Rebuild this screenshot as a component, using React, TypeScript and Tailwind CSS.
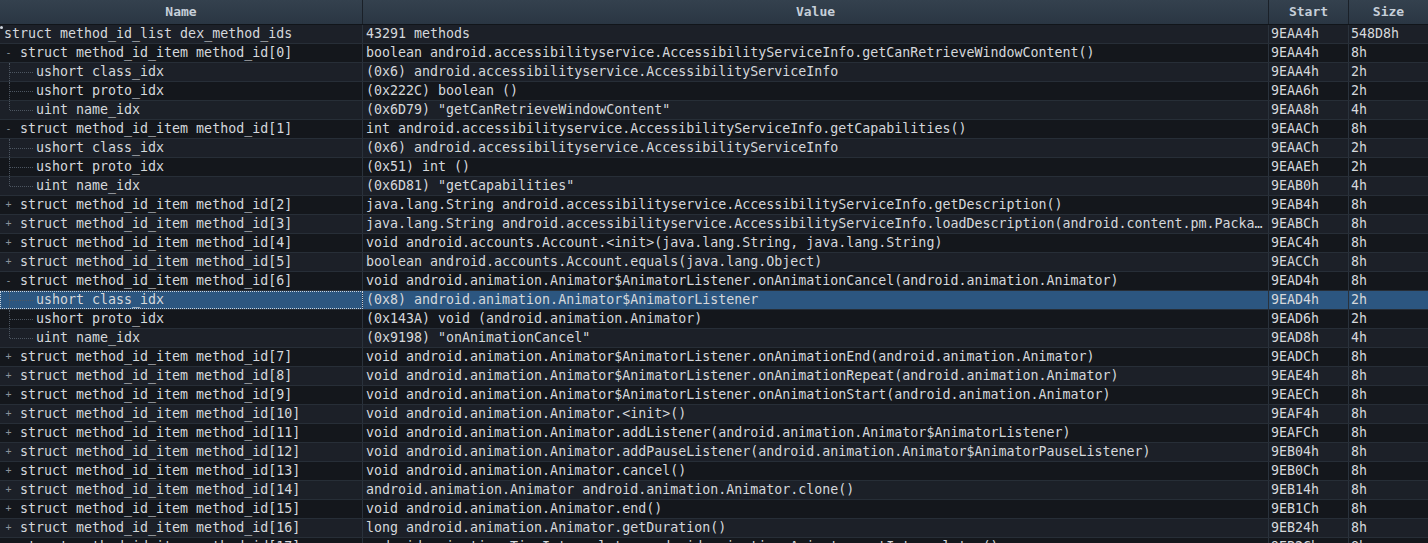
import React from "react";

type Row = {
  name: string;
  value: string;
  start: string;
  size: string;
  level: 0 | 1 | 2;
  toggle?: "+" | "-";
  last?: boolean;
};

const A = "android.accessibilityservice.AccessibilityServiceInfo";
const L = "void android.animation.Animator$AnimatorListener";

const item = (i: number) => `struct method_id_item method_id[${i}]`;

const rows: Row[] = [
  { level: 0, name: "struct method_id_list dex_method_ids", value: "43291 methods", start: "9EAA4h", size: "548D8h" },
  { level: 1, toggle: "-", name: item(0), value: `boolean ${A}.getCanRetrieveWindowContent()`, start: "9EAA4h", size: "8h" },
  { level: 2, name: "ushort class_idx", value: `(0x6) ${A}`, start: "9EAA4h", size: "2h" },
  { level: 2, name: "ushort proto_idx", value: "(0x222C) boolean ()", start: "9EAA6h", size: "2h" },
  { level: 2, last: true, name: "uint name_idx", value: '(0x6D79) "getCanRetrieveWindowContent"', start: "9EAA8h", size: "4h" },
  { level: 1, toggle: "-", name: item(1), value: `int ${A}.getCapabilities()`, start: "9EAACh", size: "8h" },
  { level: 2, name: "ushort class_idx", value: `(0x6) ${A}`, start: "9EAACh", size: "2h" },
  { level: 2, name: "ushort proto_idx", value: "(0x51) int ()", start: "9EAAEh", size: "2h" },
  { level: 2, last: true, name: "uint name_idx", value: '(0x6D81) "getCapabilities"', start: "9EAB0h", size: "4h" },
  { level: 1, toggle: "+", name: item(2), value: `java.lang.String ${A}.getDescription()`, start: "9EAB4h", size: "8h" },
  { level: 1, toggle: "+", name: item(3), value: `java.lang.String ${A}.loadDescription(android.content.pm.PackageManager)`, start: "9EABCh", size: "8h" },
  { level: 1, toggle: "+", name: item(4), value: "void android.accounts.Account.<init>(java.lang.String, java.lang.String)", start: "9EAC4h", size: "8h" },
  { level: 1, toggle: "+", name: item(5), value: "boolean android.accounts.Account.equals(java.lang.Object)", start: "9EACCh", size: "8h" },
  { level: 1, toggle: "-", name: item(6), value: `${L}.onAnimationCancel(android.animation.Animator)`, start: "9EAD4h", size: "8h" },
  { level: 2, name: "ushort class_idx", value: "(0x8) android.animation.Animator$AnimatorListener", start: "9EAD4h", size: "2h" },
  { level: 2, name: "ushort proto_idx", value: "(0x143A) void (android.animation.Animator)", start: "9EAD6h", size: "2h" },
  { level: 2, last: true, name: "uint name_idx", value: '(0x9198) "onAnimationCancel"', start: "9EAD8h", size: "4h" },
  { level: 1, toggle: "+", name: item(7), value: `${L}.onAnimationEnd(android.animation.Animator)`, start: "9EADCh", size: "8h" },
  { level: 1, toggle: "+", name: item(8), value: `${L}.onAnimationRepeat(android.animation.Animator)`, start: "9EAE4h", size: "8h" },
  { level: 1, toggle: "+", name: item(9), value: `${L}.onAnimationStart(android.animation.Animator)`, start: "9EAECh", size: "8h" },
  { level: 1, toggle: "+", name: item(10), value: "void android.animation.Animator.<init>()", start: "9EAF4h", size: "8h" },
  { level: 1, toggle: "+", name: item(11), value: "void android.animation.Animator.addListener(android.animation.Animator$AnimatorListener)", start: "9EAFCh", size: "8h" },
  { level: 1, toggle: "+", name: item(12), value: "void android.animation.Animator.addPauseListener(android.animation.Animator$AnimatorPauseListener)", start: "9EB04h", size: "8h" },
  { level: 1, toggle: "+", name: item(13), value: "void android.animation.Animator.cancel()", start: "9EB0Ch", size: "8h" },
  { level: 1, toggle: "+", name: item(14), value: "android.animation.Animator android.animation.Animator.clone()", start: "9EB14h", size: "8h" },
  { level: 1, toggle: "+", name: item(15), value: "void android.animation.Animator.end()", start: "9EB1Ch", size: "8h" },
  { level: 1, toggle: "+", name: item(16), value: "long android.animation.Animator.getDuration()", start: "9EB24h", size: "8h" },
  { level: 1, toggle: "+", name: item(17), value: "android.animation.TimeInterpolator android.animation.Animator.getInterpolator()", start: "9EB2Ch", size: "8h" },
];

const SELECTED = 14;

function NameCell({ row, selected }: { row: Row; selected: boolean }) {
  return (
    <div
      className={`relative w-[363px] shrink-0 h-full flex items-center border-r border-[#2a323c] overflow-hidden whitespace-nowrap ${
        selected ? "outline outline-1 outline-dotted outline-[#c9d4e0] -outline-offset-1" : ""
      }`}
    >
      {row.level === 0 && (
        <>
          <span className="absolute left-0 top-[1px] w-[3px] h-[3px] bg-[#cfd6de] rounded-full" />
          <span className="pl-[4px]">{row.name}</span>
        </>
      )}
      {row.level === 1 && (
        <>
          <span className="w-[20px] shrink-0 flex justify-center pl-[1px] pr-[4px] text-[10px] text-[#8a939c]">
            {row.toggle}
          </span>
          <span>{row.name}</span>
        </>
      )}
      {row.level === 2 && (
        <>
          <span
            className={`absolute left-[9px] top-0 border-l border-dotted border-[#4d5661] ${
              row.last ? "h-1/2" : "h-full"
            }`}
          />
          <span className="absolute left-[10px] top-1/2 w-[23px] border-t border-dotted border-[#4d5661]" />
          <span className="pl-[36px]">{row.name}</span>
        </>
      )}
    </div>
  );
}

export default function App() {
  return (
    <div className="w-[1428px] h-[543px] overflow-hidden bg-[#15181e] font-['DejaVu_Sans_Mono',monospace] text-[13.3px] leading-[18px] text-[#d5d8dc]">
      {/* Header */}
      <div className="flex h-[25px] bg-gradient-to-b from-[#34414e] to-[#2a3643] border-b border-[#11151a] font-bold text-[#c6cfd9] text-[13px]">
        <div className="w-[363px] shrink-0 flex items-center justify-center border-r border-[#1a2028]">Name</div>
        <div className="w-[906px] shrink-0 flex items-center justify-center border-r border-[#1a2028]">Value</div>
        <div className="w-[80px] shrink-0 flex items-center justify-center border-r border-[#1a2028]">Start</div>
        <div className="flex-1 flex items-center justify-center">Size</div>
      </div>

      {/* Rows */}
      {rows.map((row, i) => {
        const selected = i === SELECTED;
        const bg = selected ? "bg-[#2c5680]" : i % 2 === 0 ? "bg-[#1c2028]" : "bg-[#14171c]";
        return (
          <div key={i} className={`flex h-[19px] border-b border-[#272e37] ${bg}`}>
            <NameCell row={row} selected={selected} />
            <div className="w-[906px] shrink-0 flex items-center pl-[3px] pr-[3px] border-r border-[#2a323c] overflow-hidden">
              <span className="block min-w-0 flex-1 overflow-hidden text-ellipsis whitespace-nowrap">{row.value}</span>
            </div>
            <div className="w-[80px] shrink-0 flex items-center pl-[2px] border-r border-[#2a323c] whitespace-nowrap">
              {row.start}
            </div>
            <div className="flex-1 flex items-center pl-[2px] whitespace-nowrap">{row.size}</div>
          </div>
        );
      })}
    </div>
  );
}
